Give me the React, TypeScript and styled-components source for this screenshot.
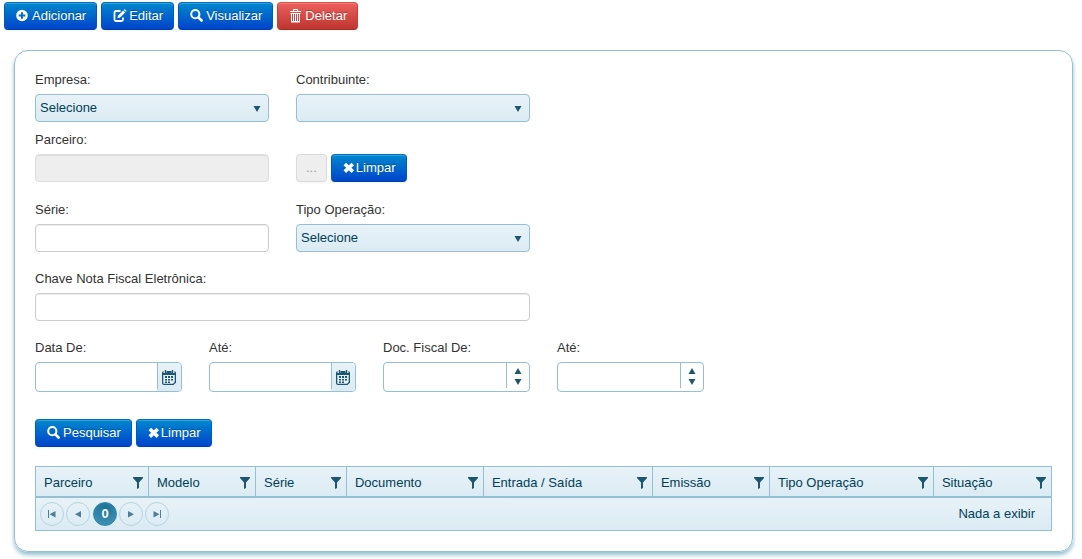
import React from "react";
import styled, { createGlobalStyle, css } from "styled-components";

const line = "#94c0d2";
const ink = "#003f59";
const iconInk = "#1c5670";
const softFill = "linear-gradient(to bottom, #e8f2f8, #dbebf3)";

const GlobalStyle = createGlobalStyle`
  *, *::before, *::after { box-sizing: border-box; }
  body {
    margin: 0;
    background: #fff;
    color: #333;
    font: 13px/20px "Liberation Sans", Arial, sans-serif;
  }
  button, input, select { font: inherit; margin: 0; }
`;

const Page = styled.div`
  padding-bottom: 7px;
`;

const Toolbar = styled.div`
  display: flex;
  gap: 4px;
  padding: 2px 4px;
`;

const tones = {
  primary: css`
    background: linear-gradient(to bottom, #0088cc, #0044cc);
    border-color: #0070c4 #0058c4 #003fa8;
  `,
  danger: css`
    background: linear-gradient(to bottom, #ee5f5b, #bd362f);
    border-color: #d9524d #c0423c #a32f29;
  `,
  muted: css`
    padding: 0 9px;
    background: #eee;
    border-color: #d9d9d9;
    color: #999;
    text-shadow: none;
  `,
};

const Button = styled.button<{ $tone?: keyof typeof tones; $gap?: number }>`
  display: inline-flex;
  align-items: center;
  justify-content: center;
  gap: ${(p) => p.$gap ?? 2}px;
  height: 28px;
  padding: 0 10px 0 11px;
  border: 1px solid;
  border-radius: 4px;
  color: #fff;
  line-height: 18px;
  text-shadow: 0 -1px 0 rgba(0, 0, 0, 0.25);
  white-space: nowrap;
  box-shadow: inset 0 1px 0 rgba(255, 255, 255, 0.2), 0 1px 2px rgba(0, 0, 0, 0.05);
  ${(p) => tones[p.$tone ?? "primary"]}
`;

const Panel = styled.main`
  margin: 18px 9px 0 14px;
  padding: 19px 20px 20px;
  border: 1px solid ${line};
  border-radius: 14px;
  box-shadow: 0 3px 4px #94c0d2;
`;

const FormRow = styled.div<{ $after: number }>`
  display: grid;
  grid-template-columns: repeat(12, minmax(0, 1fr));
  column-gap: 27px;
  align-items: end;
  margin-bottom: ${(p) => p.$after}px;
`;

const Field = styled.div<{ $span: number }>`
  grid-column: span ${(p) => p.$span};
  display: flex;
  flex-direction: column;
  gap: 4px;
`;

const Actions = styled.div<{ $after?: number }>`
  grid-column: span 3;
  display: flex;
  gap: 4px;
  margin-bottom: ${(p) => p.$after ?? 0}px;
`;

const TextInput = styled.input`
  width: 100%;
  height: 28px;
  padding: 0 6px;
  border: 1px solid #ccc;
  border-radius: 4px;
  background: #fff;
  box-shadow: inset 0 1px 1px rgba(0, 0, 0, 0.075);
  &:disabled { background: #eee; border-color: #ddd; }
`;

const SelectWrap = styled.div`
  position: relative;
  svg {
    position: absolute;
    right: 8px;
    top: 12px;
    pointer-events: none;
  }
`;

const Select = styled.select`
  appearance: none;
  display: block;
  width: 100%;
  height: 28px;
  padding: 0 24px 0 4px;
  border: 1px solid ${line};
  border-radius: 4px;
  background: ${softFill};
  color: ${ink};
`;

const Combo = styled.div`
  display: flex;
  height: 30px;
  border: 1px solid ${line};
  border-radius: 4px;
  overflow: hidden;
  background: #fff;
`;

const ComboInput = styled.input`
  flex: 1;
  min-width: 0;
  border: 0;
  padding: 0 6px;
  background: transparent;
`;

const CalendarButton = styled.button`
  width: 24px;
  height: 28px;
  padding: 0;
  border: 0;
  background: linear-gradient(${line}, ${line}) left top / 1px 26px no-repeat, ${softFill};
  display: flex;
  align-items: center;
  justify-content: center;
`;

const Spinner = styled.div`
  width: 23px;
  height: 25px;
  border-left: 1px solid ${line};
  display: flex;
  flex-direction: column;
  align-items: center;
  padding-top: 2px;
`;

const SpinButton = styled.button`
  width: 20px;
  height: 11px;
  padding: 0;
  border: 0;
  background: none;
  display: flex;
  align-items: center;
  justify-content: center;
`;

const Grid = styled.table`
  width: 100%;
  table-layout: fixed;
  border-collapse: separate;
  border-spacing: 0;
  border: 1px solid ${line};
  color: ${ink};
`;

const HeadCell = styled.th`
  height: 31px;
  padding: 0 5px 0 8px;
  font-weight: normal;
  text-align: left;
  background: ${softFill};
  border-bottom: 2px solid ${line};
  & + & { border-left: 1px solid ${line}; }
`;

const HeadContent = styled.div`
  display: flex;
  align-items: center;
  justify-content: space-between;
  height: 28px;
  padding-top: 2px;
  white-space: nowrap;
`;

const FilterButton = styled.button`
  display: flex;
  padding: 0;
  border: 0;
  background: none;
`;

const FootCell = styled.td`
  padding: 0;
  background: ${softFill};
`;

const Pager = styled.div`
  display: flex;
  align-items: center;
  gap: 2px;
  height: 32px;
  padding: 0 16px 0 4px;
`;

const PageButton = styled.button<{ $current?: boolean }>`
  display: flex;
  align-items: center;
  justify-content: center;
  width: 24px;
  height: 24px;
  margin-left: ${(p) => (p.$current ? 1 : 0)}px;
  padding: 0;
  border-radius: 50%;
  border: 1px solid ${(p) => (p.$current ? "#2f86aa" : "#b5d3e0")};
  background: ${(p) => (p.$current ? "radial-gradient(circle at 50% 20%, #1c7299, #4596b8)" : "transparent")};
  color: #fff;
  font-weight: bold;
`;

const PagerInfo = styled.span`
  margin-left: auto;
`;

const Arrow = ({ up = false }: { up?: boolean }) => (
  <svg width="8" height="6" viewBox="0 0 8 6" fill={iconInk} aria-hidden="true">
    <path d={up ? "M4 0L7.500 6H.5z" : "M.5 0h7L4 6z"} />
  </svg>
);

const PlusIcon = () => (
  <svg width="14" height="14" viewBox="0 0 14 14" aria-hidden="true">
    <circle cx="6" cy="6.500" r="5.800" fill="#fff" />
    <path d="M6 3.200v6.600M2.700 6.500h6.600" stroke="#0072cc" strokeWidth="2" />
  </svg>
);

const EditIcon = () => (
  <svg width="14" height="14" viewBox="0 0 14 14" fill="none" stroke="#fff" strokeWidth="1.800" aria-hidden="true">
    <path d="M7.500 2H3Q1.500 2 1.500 3.500v7Q1.500 12 3 12h5.500Q10 12 10 10.500V8.500" />
    <path d="M4.500 9.300l.6-2.700L10.200 1.500l2 2-5 4.900z" fill="#fff" stroke="none" />
    <path d="M10.800.9l.8-.8 2 1.900-.8.800z" fill="#fff" stroke="none" />
  </svg>
);

const SearchIcon = () => (
  <svg width="14" height="14" viewBox="0 0 14 14" fill="none" stroke="#fff" aria-hidden="true">
    <circle cx="5.300" cy="5.200" r="4.100" strokeWidth="2" />
    <path d="M8.400 8.300l3.200 3.200" strokeWidth="2.600" strokeLinecap="round" />
  </svg>
);

const TrashIcon = () => (
  <svg width="14" height="14" viewBox="0 0 14 14" fill="none" stroke="#fff" aria-hidden="true">
    <path d="M1 2.500h11M4.500 2V.5h4V2M1.500 4.500h10" />
    <path d="M2.500 4v8.500h8V4M4.500 5v7M6.500 5v7M8.500 5v7" />
    <path d="M2 13h9" />
  </svg>
);

const RemoveIcon = () => (
  <svg width="12" height="12" viewBox="0 0 12 12" aria-hidden="true">
    <path d="M1.800 2l8 7.600M9.800 2l-8 7.600" stroke="#fff" strokeWidth="3.600" />
  </svg>
);

const CalendarIcon = () => (
  <svg width="14" height="15" viewBox="0 0 14 15" aria-hidden="true">
    <path d="M2 1h10q2 0 2 2v9.500L11.500 15H2q-2 0-2-2V3q0-2 2-2z" fill={iconInk} />
    <path d="M1.300 5h11.400v7L11 13.700H1.300z" fill="#e5f0f6" />
    <path d="M3 0v3M11 0v3" stroke="#e5f0f6" strokeWidth="3" />
    <path d="M3.500 0v3M10.500 0v3" stroke={iconInk} strokeWidth="1.400" />
    <path d="M6 6h2v2H6zM9 6h2v2H9zM3 9h2v1.500H3zM6 9h2v1.500H6zM9 9h2v1.500H9zM3 11.500h2V13H3zM6 11.500h2V13H6zM3 6h2v2H3z" fill={iconInk} />
  </svg>
);

const FilterIcon = () => (
  <svg width="10" height="12" viewBox="0 0 10 12" fill={iconInk} aria-hidden="true">
    <path d="M0 0h10v1L6 5.500V11l-2 1V5.500L0 1z" />
  </svg>
);

const pagePaths = {
  first: "M0 0h1v8H0zM7.500 1v6.500L1.500 4.200z",
  prev: "M7 1v6.500L1 4.200z",
  next: "M1 1v6.500l6-3.300z",
  last: "M7 0h1v8H7zM.5 1v6.500l6-3.300z",
};

const PageIcon = ({ kind }: { kind: keyof typeof pagePaths }) => (
  <svg width="8" height="8" viewBox="0 0 8 8" fill="#4f7f96" aria-hidden="true">
    <path d={pagePaths[kind]} />
  </svg>
);

const SelectField = ({ id, label, option }: { id: string; label: string; option: string }) => (
  <Field $span={3}>
    <label htmlFor={id}>{label}</label>
    <SelectWrap>
      <Select id={id}>
        <option>{option}</option>
      </Select>
      <Arrow />
    </SelectWrap>
  </Field>
);

const DateField = ({ id, label }: { id: string; label: string }) => (
  <Field $span={2}>
    <label htmlFor={id}>{label}</label>
    <Combo>
      <ComboInput id={id} type="text" />
      <CalendarButton type="button" aria-label="Abrir calendário">
        <CalendarIcon />
      </CalendarButton>
    </Combo>
  </Field>
);

const NumberField = ({ id, label }: { id: string; label: string }) => (
  <Field $span={2}>
    <label htmlFor={id}>{label}</label>
    <Combo>
      <ComboInput id={id} type="text" inputMode="numeric" />
      <Spinner>
        <SpinButton type="button" aria-label="Aumentar"><Arrow up /></SpinButton>
        <SpinButton type="button" aria-label="Diminuir"><Arrow /></SpinButton>
      </Spinner>
    </Combo>
  </Field>
);

const columns = [
  { title: "Parceiro", width: 112 },
  { title: "Modelo", width: 107 },
  { title: "Série", width: 91 },
  { title: "Documento", width: 137 },
  { title: "Entrada / Saída", width: 169 },
  { title: "Emissão", width: 117 },
  { title: "Tipo Operação", width: 164 },
  { title: "Situação", width: 118 },
];
const totalWidth = columns.reduce((sum, c) => sum + c.width, 0);

export default function App() {
  return (
    <Page>
      <GlobalStyle />
      <Toolbar>
        <Button type="button"><PlusIcon />Adicionar</Button>
        <Button type="button"><EditIcon />Editar</Button>
        <Button type="button"><SearchIcon />Visualizar</Button>
        <Button type="button" $tone="danger"><TrashIcon />Deletar</Button>
      </Toolbar>
      <Panel>
        <FormRow $after={8}>
          <SelectField id="empresa" label="Empresa:" option="Selecione" />
          <SelectField id="contribuinte" label="Contribuinte:" option="" />
        </FormRow>
        <FormRow $after={18}>
          <Field $span={3}>
            <label htmlFor="parceiro">Parceiro:</label>
            <TextInput id="parceiro" type="text" disabled />
          </Field>
          <Actions>
            <Button type="button" $tone="muted" disabled>...</Button>
            <Button type="button" $gap={1}><RemoveIcon />Limpar</Button>
          </Actions>
        </FormRow>
        <FormRow $after={17}>
          <Field $span={3}>
            <label htmlFor="serie">Série:</label>
            <TextInput id="serie" type="text" />
          </Field>
          <SelectField id="tipo" label="Tipo Operação:" option="Selecione" />
        </FormRow>
        <FormRow $after={17}>
          <Field $span={6}>
            <label htmlFor="chave">Chave Nota Fiscal Eletrônica:</label>
            <TextInput id="chave" type="text" />
          </Field>
        </FormRow>
        <FormRow $after={27}>
          <DateField id="data-de" label="Data De:" />
          <DateField id="data-ate" label="Até:" />
          <NumberField id="doc-de" label="Doc. Fiscal De:" />
          <NumberField id="doc-ate" label="Até:" />
        </FormRow>
        <Actions $after={19}>
          <Button type="button"><SearchIcon />Pesquisar</Button>
          <Button type="button" $gap={1}><RemoveIcon />Limpar</Button>
        </Actions>
        <Grid>
          <colgroup>
            {columns.map((c) => (
              <col key={c.title} style={{ width: `${(c.width / totalWidth) * 100}%` }} />
            ))}
          </colgroup>
          <thead>
            <tr>
              {columns.map((c) => (
                <HeadCell key={c.title} scope="col">
                  <HeadContent>
                    {c.title}
                    <FilterButton type="button" aria-label={`Filtrar ${c.title}`}>
                      <FilterIcon />
                    </FilterButton>
                  </HeadContent>
                </HeadCell>
              ))}
            </tr>
          </thead>
          <tfoot>
            <tr>
              <FootCell colSpan={columns.length}>
                <Pager>
                  <PageButton type="button" aria-label="Primeira página"><PageIcon kind="first" /></PageButton>
                  <PageButton type="button" aria-label="Página anterior"><PageIcon kind="prev" /></PageButton>
                  <PageButton type="button" $current>0</PageButton>
                  <PageButton type="button" aria-label="Próxima página"><PageIcon kind="next" /></PageButton>
                  <PageButton type="button" aria-label="Última página"><PageIcon kind="last" /></PageButton>
                  <PagerInfo>Nada a exibir</PagerInfo>
                </Pager>
              </FootCell>
            </tr>
          </tfoot>
        </Grid>
      </Panel>
    </Page>
  );
}
